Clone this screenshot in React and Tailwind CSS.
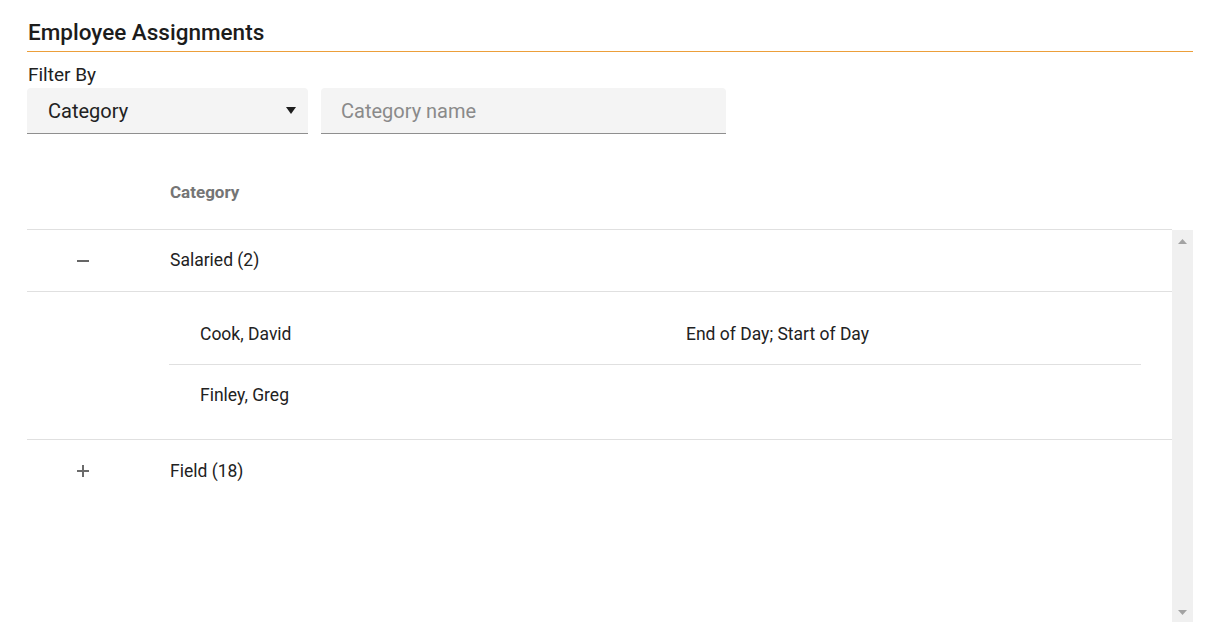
import React from "react";

function Minus() {
  return (
    <svg width="14" height="14" viewBox="0 0 14 14">
      <rect x="1" y="6" width="12" height="2" fill="#666666" />
    </svg>
  );
}
function Plus() {
  return (
    <svg width="14" height="14" viewBox="0 0 14 14">
      <rect x="1" y="6" width="12" height="2" fill="#6b6b6b" />
      <rect x="6" y="1" width="2" height="12" fill="#6b6b6b" />
    </svg>
  );
}

export default function App() {
  return (
    <div
      className="w-[1215px] h-[641px] bg-white pl-[27px] pr-[22px] text-[#212121] overflow-hidden"
      style={{ fontFamily: "Roboto, 'Liberation Sans', sans-serif" }}
    >
      <div className="pt-[19px] pb-[6px] border-b border-[#ec9f3a] pl-[1px] text-[22.5px] font-medium leading-[26px] text-[#1c1c1c]">
        Employee Assignments
      </div>
      <div className="mt-[12px] pl-[1px] text-[19px] leading-[22px]">Filter By</div>
      <div className="mt-[2px] flex gap-[13px]">
        <div className="w-[281px] h-[46px] bg-[#f4f4f4] rounded-t-[4px] border-b border-[#8f8f8f] flex items-center justify-between pl-[21px] pr-[12px]">
          <span className="text-[20px] text-[#222]">Category</span>
          <svg width="10" height="7" viewBox="0 0 10 7">
            <path d="M0 0 L10 0 L5 7 Z" fill="#1e1e1e" />
          </svg>
        </div>
        <div className="w-[405px] h-[46px] bg-[#f4f4f4] rounded-t-[4px] border-b border-[#8f8f8f] flex items-center pl-[20px]">
          <span className="text-[20px] text-[#8a8a8a]">Category name</span>
        </div>
      </div>

      <div className="mt-[22px] flex">
        <div className="flex-1 flex flex-col">
          <div className="h-[74px] flex items-center border-b border-[#e0e0e0]">
            <div className="w-[112px]" />
            <div className="pl-[31px] text-[17px] font-bold text-[#757575]">Category</div>
          </div>
        </div>
        <div className="w-[21px]" />
      </div>

      <div className="flex h-[392px]">
        <div className="flex-1 flex flex-col text-[17.5px] text-[#222]">
          <div className="h-[62px] flex items-center border-b border-[#e0e0e0]">
            <div className="w-[112px] flex justify-center">
              <Minus />
            </div>
            <div className="pl-[31px]">Salaried (2)</div>
          </div>
          <div className="pt-[13px] pb-[13px] pl-[142px] pr-[31px] border-b border-[#e0e0e0]">
            <div className="h-[60px] flex items-center border-b border-[#e0e0e0]">
              <div className="flex-1 pl-[31px]">Cook, David</div>
              <div className="flex-1 pl-[31px]">End of Day; Start of Day</div>
            </div>
            <div className="h-[61px] flex items-center">
              <div className="flex-1 pl-[31px]">Finley, Greg</div>
              <div className="flex-1 pl-[31px]" />
            </div>
          </div>
          <div className="h-[62px] flex items-center">
            <div className="w-[112px] flex justify-center">
              <Plus />
            </div>
            <div className="pl-[31px]">Field (18)</div>
          </div>
        </div>
        <div className="w-[21px] bg-[#f0f0f0] flex flex-col items-center justify-between pt-[9px] pb-[7px]">
          <svg width="9" height="5" viewBox="0 0 9 5">
            <path d="M0 5 L9 5 L4.5 0 Z" fill="#a3a3a3" />
          </svg>
          <svg width="9" height="5" viewBox="0 0 9 5">
            <path d="M0 0 L9 0 L4.5 5 Z" fill="#a3a3a3" />
          </svg>
        </div>
      </div>
    </div>
  );
}
